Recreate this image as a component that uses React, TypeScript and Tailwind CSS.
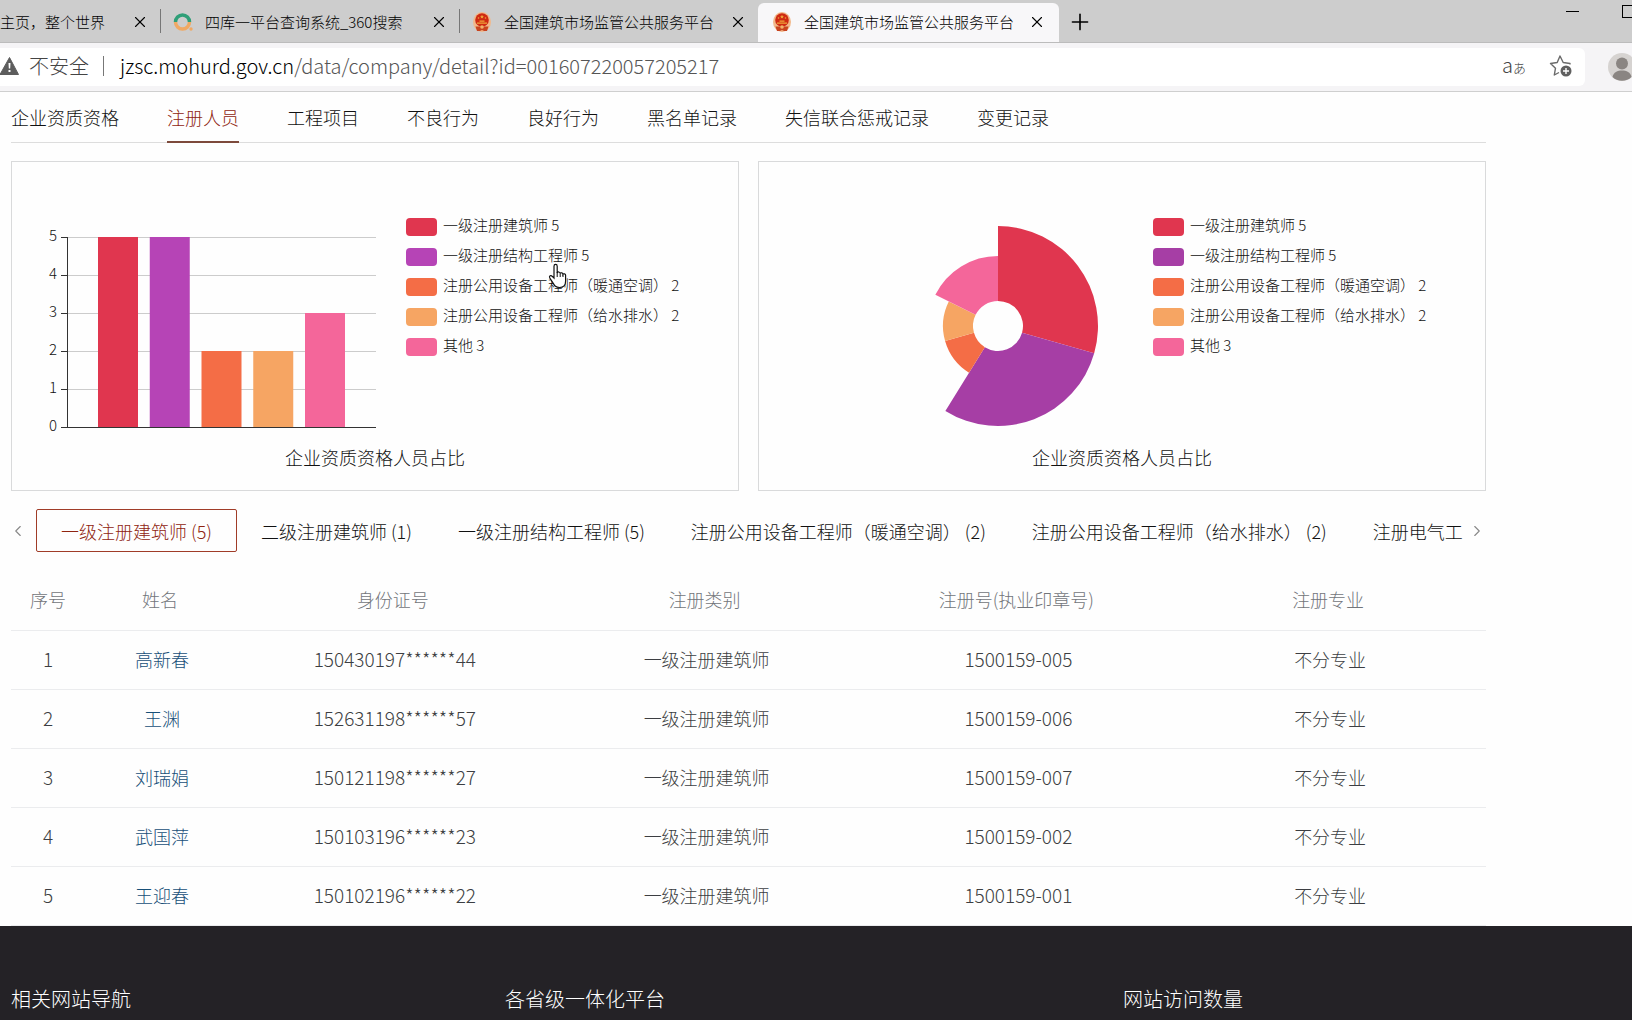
import React from 'react';
import { ChevronLeft, ChevronRight, Plus, X } from 'lucide-react';

const navTabs = ['企业资质资格', '注册人员', '工程项目', '不良行为', '良好行为', '黑名单记录', '失信联合惩戒记录', '变更记录'];

const staff = [
  { name: '一级注册建筑师', value: 5, color: '#e0364f', pieColor: '#e0364f' },
  { name: '一级注册结构工程师', value: 5, color: '#b644b6', pieColor: '#a63ea5' },
  { name: '注册公用设备工程师（暖通空调）', value: 2, color: '#f46d46', pieColor: '#f46d46' },
  { name: '注册公用设备工程师（给水排水）', value: 2, color: '#f6a563', pieColor: '#f6a563' },
  { name: '其他', value: 3, color: '#f4669a', pieColor: '#f4669a' }
];

const categories = [
  '一级注册建筑师 (5)',
  '二级注册建筑师 (1)',
  '一级注册结构工程师 (5)',
  '注册公用设备工程师（暖通空调） (2)',
  '注册公用设备工程师（给水排水） (2)',
  '注册电气工'
];

const people = [
  { name: '高新春', idNo: '150430197******44', regNo: '1500159-005' },
  { name: '王渊', idNo: '152631198******57', regNo: '1500159-006' },
  { name: '刘瑞娟', idNo: '150121198******27', regNo: '1500159-007' },
  { name: '武国萍', idNo: '150103196******23', regNo: '1500159-002' },
  { name: '王迎春', idNo: '150102196******22', regNo: '1500159-001' }
];

const Emblem = () => (
  <svg className="h-5 w-5 shrink-0" viewBox="0 0 20 20" aria-hidden="true">
    <ellipse cx="10" cy="10" rx="9" ry="10" fill="#f2b88a" />
    <circle cx="10" cy="8" r="6.800" fill="#cf2a12" />
    <path d="M3.500 14.500h13l-1.500 4.500h-3l-2-1-2 1H5z" fill="#c8441f" />
    <path d="M10 2.800l.6 1.200 1.300.2-.9.900.2 1.300-1.200-.6-1.200.6.2-1.300-.9-.9 1.300-.2z" fill="#f0a53a" />
    <circle cx="6.500" cy="6" r=".8" fill="#f0a53a" />
    <circle cx="13.500" cy="6" r=".8" fill="#f0a53a" />
    <path d="M5 10.500h10v1.200H5zM7.500 8.500h5v1.200h-5z" fill="#f0a53a" />
    <circle cx="10" cy="15" r="1.800" fill="#f2b36a" />
  </svg>
);

const SearchLogo = () => (
  <svg className="h-5 w-5 shrink-0" viewBox="0 0 20 20" aria-hidden="true">
    <path d="M2.500 10a7 7 0 0 1 14 0" fill="none" stroke="#2f9f78" strokeWidth="3.500" />
    <path d="M2.500 10a7 7 0 0 0 14 0" fill="none" stroke="#f0a964" strokeWidth="3.500" />
    <circle cx="18" cy="17" r="1.700" fill="#f0a964" />
  </svg>
);

const Legend = ({ pie = false }: { pie?: boolean }) => (
  <ul className="mt-14 flex flex-col gap-3">
    {staff.map((item) => (
      <li key={item.name} className="flex h-[18px] items-center gap-1.5 whitespace-pre text-[15px] text-[#111]">
        <span className="h-[18px] w-[31px] rounded" style={{ backgroundColor: pie ? item.pieColor : item.color }} />
        <span className="pb-1 leading-4">{`${item.name} ${item.value}`}</span>
      </li>
    ))}
  </ul>
);

const BarChart = () => (
  <svg className="h-[274px] w-[394px] shrink-0" viewBox="0 0 394 274">
    {[0, 1, 2, 3, 4, 5].map((tick) => {
      const y = 265 - tick * 38;
      return (
        <g key={tick}>
          {tick > 0 && <rect x="56" y={y} width="308" height="1" fill="#ccc" />}
          <rect x="49" y={y} width="7" height="1" fill="#333" />
          <text x="45" y={y + 4} fontSize="15" textAnchor="end" fill="#111">{tick}</text>
        </g>
      );
    })}
    {staff.map((item, index) => (
      <rect
        key={item.name}
        x={86 + index * 51.75}
        y={265 - item.value * 38}
        width="40"
        height={item.value * 38}
        fill={item.color}
      />
    ))}
    <rect x="55" y="75" width="1" height="191" fill="#333" />
    <rect x="55" y="265" width="309" height="1" fill="#333" />
  </svg>
);

const RoseChart = () => {
  const cx = 239;
  const cy = 164;
  const inner = 25;
  const total = staff.reduce((sum, item) => sum + item.value, 0);
  const point = (r: number, a: number) => `${cx + r * Math.sin(a)} ${cy - r * Math.cos(a)}`;
  let start = 0;

  return (
    <svg className="h-[274px] w-[394px] shrink-0" viewBox="0 0 394 274">
      {staff.map((item) => {
        const from = start;
        const to = from + (item.value / total) * Math.PI * 2;
        // radius grows with the value, the largest slice reaches 100
        const outer = inner + 75 * (item.value / 5);
        start = to;
        return (
          <path
            key={item.name}
            d={`M${point(inner, from)}L${point(outer, from)}A${outer} ${outer} 0 0 1 ${point(outer, to)}L${point(inner, to)}A${inner} ${inner} 0 0 0 ${point(inner, from)}Z`}
            fill={item.pieColor}
          />
        );
      })}
    </svg>
  );
};

const BrowserTab = ({ title, icon, active = false }: { title: string; icon: React.ReactNode; active?: boolean }) => (
  <div
    className={
      active
        ? 'mt-[3px] flex w-[301px] shrink-0 items-center rounded-t-md bg-[#f8f7f9] pb-px pl-[14px] pr-3'
        : 'flex w-[298px] shrink-0 items-center pl-3 pr-2.5 pt-0.5'
    }
  >
    {icon}
    <span className="ml-3 flex-1 overflow-hidden whitespace-nowrap">{title}</span>
    <button type="button" aria-label="关闭" className="p-px"><X size={18} strokeWidth={1.5} /></button>
  </div>
);

const App = () => {
  return (
    <div className="min-h-screen overflow-hidden bg-[#fefefe] font-['Noto_Sans_CJK_SC',sans-serif] font-light text-[#111]">
      {/* Browser tabs */}
      <div className="flex h-[43px] border-b border-[#bcbcbc] bg-[#cdcdcd] text-[15px] text-black">
        <div className="flex w-40 shrink-0 items-center justify-between pr-2.5 pt-0.5">
          <span className="whitespace-nowrap">主页，整个世界</span>
          <button type="button" aria-label="关闭" className="p-px"><X size={18} strokeWidth={1.5} /></button>
        </div>
        <div className="my-auto h-6 w-px bg-[#777]" />
        <BrowserTab title="四库一平台查询系统_360搜索" icon={<SearchLogo />} />
        <div className="my-auto h-6 w-px bg-[#777]" />
        <BrowserTab title="全国建筑市场监管公共服务平台" icon={<Emblem />} />
        <BrowserTab title="全国建筑市场监管公共服务平台" icon={<Emblem />} active />
        <button type="button" aria-label="新建标签页" className="ml-2 pt-0.5"><Plus size={26} strokeWidth={1.5} /></button>
        <div className="ml-auto flex items-start gap-[43px] overflow-hidden">
          <button type="button" aria-label="最小化" className="mt-[11px] h-px w-[13px] bg-black" />
          <button type="button" aria-label="最大化" className="-mr-[3px] mt-[5px] h-[13px] w-[13px] border border-black" />
        </div>
      </div>

      {/* Address bar */}
      <div className="flex h-[49px] items-center overflow-hidden border-b border-[#cfcfcf] bg-[#f5f4f6]">
        <div className="flex h-[38px] flex-1 items-center rounded-r-md bg-white pb-0.5 text-xl">
          <svg className="h-5 w-5 shrink-0" viewBox="0 0 20 20" aria-hidden="true">
            <path d="M9.500 1.500 18.500 18.500H0z" fill="#5d5d5d" stroke="#5d5d5d" strokeLinejoin="round" />
            <path d="M8.500 7h2l-.3 5.500H8.800zM8.500 14h2v2h-2z" fill="#fff" />
          </svg>
          <span className="ml-[9px] text-[#444]">不安全</span>
          <span className="ml-3.5 mr-4 h-5 w-px bg-[#777]" />
          <span className="text-[#555]">
            <span className="text-black">jzsc.mohurd.gov.cn</span>/data/company/detail?id=001607220057205217
          </span>
          <button type="button" className="ml-auto flex items-baseline text-[#444]">
            <span className="text-xl leading-6">a</span>
            <span className="text-[13px] leading-6">あ</span>
          </button>
          <button type="button" aria-label="收藏" className="ml-[23px] mr-3">
            <svg className="h-6 w-6" viewBox="0 0 24 24">
              <path d="M21 10.500 21 9.500l-6.800-1L11 2 8.200 8.500l-6.700 1 5 4.700-1.200 6.800 4.700-2.500" fill="none" stroke="#6b6b6b" strokeWidth="1.400" strokeLinejoin="round" />
              <circle cx="17" cy="17" r="5.500" fill="#606060" />
              <path d="M17 14v6M14 17h6" stroke="#fff" strokeWidth="1.400" />
            </svg>
          </button>
        </div>
        <button type="button" aria-label="用户" className="-mr-1 ml-[23px]">
          <svg className="h-7 w-7" viewBox="0 0 28 28">
            <circle cx="14" cy="14" r="14" fill="#d6d3d1" />
            <circle cx="14" cy="10.500" r="6" fill="#8a8582" />
            <path d="M4.500 24c1-5 5-6.500 9.500-6.500s8.500 1.500 9.500 6.500c-5 5-14 5-19 0z" fill="#8a8582" />
          </svg>
        </button>
      </div>

      {/* Company detail */}
      <main className="ml-[11px] mr-[146px]">
        <nav className="flex h-[51px] gap-12 border-b border-[#ddd] text-lg">
          {navTabs.map((tab, index) => (
            <button
              key={tab}
              type="button"
              className={
                index === 1
                  ? '-mb-px whitespace-nowrap border-b-2 border-[#7d4a3c] pt-px text-[#8f2410]'
                  : 'whitespace-nowrap'
              }
            >
              {tab}
            </button>
          ))}
        </nav>

        <div className="mt-[18px] grid grid-cols-2 gap-[19px]">
          <section className="relative h-[330px] border border-[#d9dadb]">
            <div className="flex">
              <BarChart />
              <Legend />
            </div>
            <h2 className="mt-[7px] text-center text-lg">企业资质资格人员占比</h2>
            {/* Pointer over the legend */}
            <svg className="absolute left-[536px] top-[101px] h-[26px] w-5" viewBox="0 0 20 26" aria-hidden="true">
              <path
                d="M6 3.200C6 .8 9.200.8 9.200 3.200V10c.4-1.600 3-1.300 3 .5.500-1.200 2.800-.9 2.800.8.600-1 2.600-.6 2.600 1V18c0 4-2 6.500-6 6.500-4.200 0-5-1.800-7-5.200L1.800 15c-1-2 1-3.200 2.400-1.700L6 15z"
                fill="#fff"
                stroke="#111"
                strokeWidth="1.200"
              />
              <path d="M9.200 9v5M12.200 10.500V14M15 11.500V14" stroke="#111" strokeWidth="1" />
            </svg>
          </section>
          <section className="h-[330px] border border-[#d9dadb]">
            <div className="flex">
              <RoseChart />
              <Legend pie />
            </div>
            <h2 className="mt-[7px] text-center text-lg">企业资质资格人员占比</h2>
          </section>
        </div>

        <div className="mt-[18px] flex h-[43px] text-lg">
          <button type="button" aria-label="上一页" className="w-[25px] shrink-0 text-[#888]">
            <ChevronLeft className="-ml-0.5" size={18} strokeWidth={1.5} />
          </button>
          <div className="flex flex-1 overflow-hidden">
            {categories.map((category, index) => (
              <button
                key={category}
                type="button"
                className={
                  index === 0
                    ? 'mr-px shrink-0 rounded-xs border border-[#a03c28] px-6 text-[#8f2410]'
                    : 'shrink-0 px-[23px]'
                }
              >
                {category}
              </button>
            ))}
          </div>
          <button type="button" aria-label="下一页" className="flex w-[18px] shrink-0 items-center justify-end text-[#888]">
            <ChevronRight size={18} strokeWidth={1.5} />
          </button>
        </div>

        <table className="mt-[19px] w-full table-fixed text-center text-lg">
          <thead>
            <tr className="h-[59px] border-b border-[#ebecee] text-[#72757a]">
              <th className="w-[74px] pb-0.5 font-light">序号</th>
              <th className="w-[154px] pb-0.5 pr-1 font-light">姓名</th>
              <th className="pb-0.5 pr-1 font-light">身份证号</th>
              <th className="pb-0.5 pr-1 font-light">注册类别</th>
              <th className="pb-0.5 pr-1 font-light">注册号(执业印章号)</th>
              <th className="pb-0.5 pr-1 font-light">注册专业</th>
            </tr>
          </thead>
          <tbody className="text-[#3c3e42]">
            {people.map((person, index) => (
              <tr key={person.regNo} className="h-[59px] border-b border-[#ebecee]">
                <td className="pb-0.5 text-[19px]">{index + 1}</td>
                <td className="pb-0.5"><a href="#" className="text-[#174f78]">{person.name}</a></td>
                <td className="pb-0.5 text-[19px]">{person.idNo}</td>
                <td className="pb-0.5">一级注册建筑师</td>
                <td className="pb-0.5 text-[19px]">{person.regNo}</td>
                <td className="pb-0.5">不分专业</td>
              </tr>
            ))}
          </tbody>
        </table>
      </main>

      {/* Footer */}
      <footer className="grid h-[95px] grid-cols-[494fr_618fr_509fr] bg-[#242226] pl-[11px] pt-[59px] text-xl text-white">
        <h3>相关网站导航</h3>
        <h3>各省级一体化平台</h3>
        <h3>网站访问数量</h3>
      </footer>
    </div>
  );
};

export default App;
